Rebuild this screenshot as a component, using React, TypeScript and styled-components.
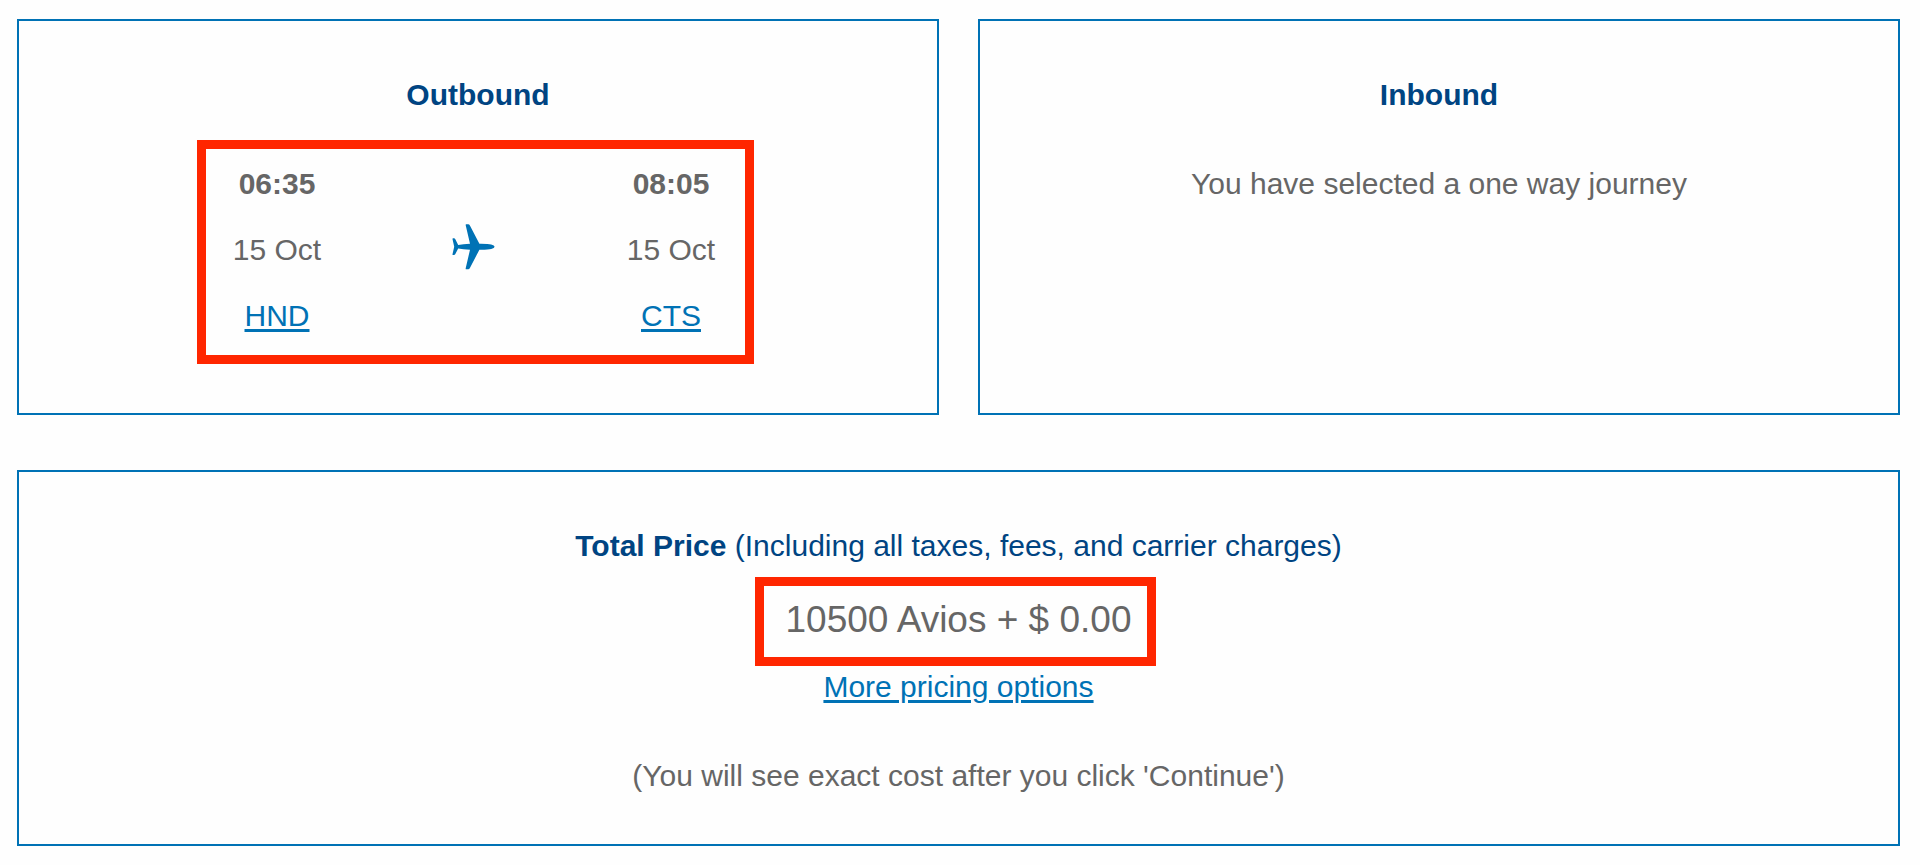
import React from "react";
import styled, { createGlobalStyle } from "styled-components";

const navy = "#004482";
const blue = "#0072b5";
const grey = "#666666";
const red = "#ff2600";

const GlobalStyle = createGlobalStyle`
  * { box-sizing: border-box; }
  body {
    margin: 0;
    background: #fefefe;
    color: ${grey};
    font-family: "Liberation Sans", Arial, Helvetica, sans-serif;
    font-size: 30px;
    line-height: 45px;
  }
`;

const Page = styled.main`
  display: flex;
  flex-direction: column;
  gap: 55px;
  padding: 19px 20px 18px 17px;
`;

const Journeys = styled.div`
  display: grid;
  grid-template-columns: 1fr 1fr;
  gap: 39px;
`;

const Card = styled.section<{ $bottom: number }>`
  display: flex;
  flex-direction: column;
  align-items: center;
  padding: 51px 20px ${(p) => p.$bottom}px;
  border: 2px solid ${blue};
  text-align: center;
`;

const Title = styled.h2<{ $gap: number }>`
  margin: 0 0 ${(p) => p.$gap}px;
  color: ${navy};
  font-size: 30px;
  font-weight: 400;
`;

const Text = styled.p`
  margin: 0;
`;

const Link = styled.a`
  color: ${blue};
  text-decoration: underline;
  text-decoration-thickness: 3px;
  text-underline-offset: 3px;
`;

const Itinerary = styled.div`
  position: relative;
  display: grid;
  grid-template-columns: repeat(3, 197px);
  align-items: center;
  justify-items: center;
  padding-right: 8px;
`;

const Stop = styled.div`
  display: flex;
  flex-direction: column;
  align-items: center;
  gap: 21px;
`;

const Price = styled.p`
  position: relative;
  margin: 0 0 22px;
  font-size: 37px;
`;

/* Red frame drawn over the content it points out. */
const Highlight = styled.span<{ $inset: string }>`
  position: absolute;
  inset: ${(p) => p.$inset};
  border: 9px solid ${red};
  pointer-events: none;
`;

const Note = styled.p`
  margin: 44px 0 0;
`;

const Plane = () => (
  <svg width="46" height="52" viewBox="0 0 46 52" fill={blue} role="img" aria-label="Flight">
    <path d="M15.2 .2H17.2Q18.3 .2 18.9 1.5L28.4 19.8Q37 19.7 40.2 20.6Q43.6 21.5 43.6 22.8Q43.6 24.1 40.2 25Q37 25.8 28.4 25.7L18.9 44Q18.3 45.3 17.2 45.3H15.2Q14.5 45.3 14.7 44.3L19 25.7Q12 25.4 7.2 24.5L4.2 30.3Q3.8 31 3 31H2.1Q1.4 31 1.5 30.2L3.2 22.8L1.5 15Q1.4 14.2 2.1 14.2H3Q3.8 14.2 4.2 15L7.2 21Q12 20.1 19 19.8L14.7 1.2Q14.5 .2 15.2 .2Z" />
  </svg>
);

const FlightStop = ({ time, date, code }: { time: string; date: string; code: string }) => (
  <Stop>
    <strong>{time}</strong>
    <span>{date}</span>
    <Link href="#">{code}</Link>
  </Stop>
);

export default function App() {
  return (
    <>
      <GlobalStyle />
      <Page>
        <Journeys>
          <Card $bottom={75}>
            <Title $gap={44}><strong>Outbound</strong></Title>
            <Itinerary>
              <FlightStop time="06:35" date="15 Oct" code="HND" />
              <Plane />
              <FlightStop time="08:05" date="15 Oct" code="CTS" />
              <Highlight $inset="-21px 24px -26px 18px" />
            </Itinerary>
          </Card>
          <Card $bottom={75}>
            <Title $gap={44}><strong>Inbound</strong></Title>
            <Text>You have selected a one way journey</Text>
          </Card>
        </Journeys>
        <Card $bottom={46}>
          <Title $gap={29}>
            <strong>Total Price</strong> (Including all taxes, fees, and carrier charges)
          </Title>
          <Price>
            10500 Avios + $ 0.00
            <Highlight $inset="-20px -25px -24px -31px" />
          </Price>
          <Link href="#">More pricing options</Link>
          <Note>(You will see exact cost after you click 'Continue')</Note>
        </Card>
      </Page>
    </>
  );
}
